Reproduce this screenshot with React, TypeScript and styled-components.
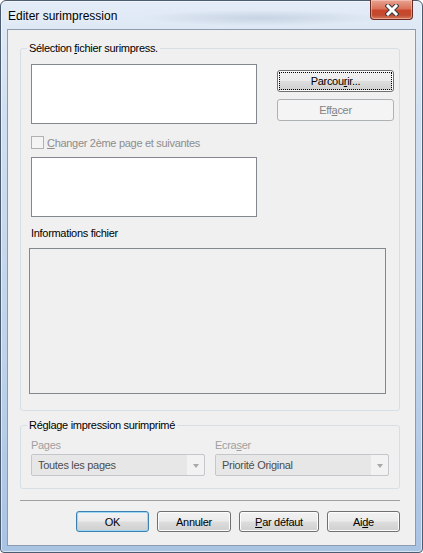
import React from 'react';
import styled, { createGlobalStyle } from 'styled-components';

const GlobalStyle = createGlobalStyle`
    html, body {
        margin: 0;
        padding: 0;
        background: #ffffff;
    }
    body {
        font-family: "Liberation Sans", Arial, sans-serif;
    }
`

const Window = styled.div`
    box-sizing: border-box;
    width: 423px;
    height: 553px;
    display: flex;
    flex-direction: column;
    padding: 0 6px 6px 6px;
    border: 1px solid #4b5b70;
    border-radius: 6px 6px 4px 4px;
    background: linear-gradient(180deg, #e3ecf7 0%, #d0def0 22%, #bed2ea 65%, #a9c3e3 100%);
    box-shadow: inset 0 0 0 1px rgba(255, 255, 255, 0.55);
`
const TitleBar = styled.div`
    height: 28px;
    display: flex;
    justify-content: space-between;
    align-items: flex-start;
    background: radial-gradient(ellipse 120px 8px at 62% 60%, rgba(110, 130, 155, 0.22), transparent);
`
const Title = styled.span`
    margin: 8px 0 0 1px;
    font-size: 12px;
    line-height: 15px;
    color: #000;
    text-shadow: 0 0 6px rgba(255, 255, 255, 0.9);
`
const CloseButton = styled.div`
    box-sizing: border-box;
    width: 43px;
    height: 20px;
    margin: -1px 3px 0 0;
    display: flex;
    align-items: center;
    justify-content: center;
    border: 1px solid #6a2c22;
    border-top: none;
    border-radius: 0 0 4px 4px;
    background: linear-gradient(180deg, #e8a493 0%, #d9735b 45%, #c8462a 55%, #c14b30 80%, #d77b5f 100%);
    box-shadow: inset 0 0 0 1px rgba(255, 220, 210, 0.45);
`
const Client = styled.div`
    flex: 1;
    display: flex;
    flex-direction: column;
    padding: 18px 15px 0 12px;
    border: 1px solid #8c9bae;
    background: #f0f0f0;
    font-size: 11px;
    letter-spacing: -0.3px;
    color: #000;
`
const Group = styled.div<{ $top: number; $bottom: number }>`
    display: flex;
    flex-direction: column;
    margin-top: ${p => p.$top}px;
    padding: 0 0 ${p => p.$bottom}px 10px;
    border: 1px solid #d5dfe5;
    border-radius: 3px;
`
const Legend = styled.div`
    align-self: flex-start;
    margin: -7px 0 0 -4px;
    padding: 0 2px;
    line-height: 13px;
    background: #f0f0f0;
`
const TopRow = styled.div`
    display: flex;
    align-items: flex-start;
    margin-top: 9px;
`
const TextBox = styled.div<{ $top?: number }>`
    box-sizing: border-box;
    width: 226px;
    height: 60px;
    margin-top: ${p => p.$top ?? 0}px;
    border: 1px solid #828790;
    background: #ffffff;
`
const ButtonColumn = styled.div`
    display: flex;
    flex-direction: column;
    gap: 7px;
    margin-left: 20px;
    padding-top: 6px;
`
const Button = styled.button<{ $w: number; $h?: number; $default?: boolean; $focus?: boolean }>`
    position: relative;
    box-sizing: border-box;
    width: ${p => p.$w}px;
    height: ${p => p.$h ?? 21}px;
    padding: 0;
    border: 1px solid ${p => (p.$default ? '#3c7fb1' : '#707070')};
    border-radius: 3px;
    background: linear-gradient(180deg, #f2f2f2 0%, #ebebeb 48%, #dddddd 52%, #cfcfcf 100%);
    box-shadow: inset 0 0 0 1px ${p => (p.$default ? '#9ad8f6' : '#fcfcfc')};
    font-family: "Liberation Sans", Arial, sans-serif;
    font-size: 11px;
    letter-spacing: -0.3px;
    color: #000;
    &::after {
        content: '';
        display: ${p => (p.$focus ? 'block' : 'none')};
        position: absolute;
        inset: 1px;
        border: 1px dotted #000;
    }
    &:disabled {
        border-color: #adb2b5;
        background: #f4f4f4;
        box-shadow: none;
        color: #838383;
    }
`
const CheckRow = styled.div`
    display: flex;
    align-items: center;
    gap: 3px;
    height: 13px;
    margin-top: 12px;
    color: #8d8d8d;
`
const CheckBox = styled.div`
    box-sizing: border-box;
    width: 13px;
    height: 13px;
    border: 1px solid #b1b1b1;
    background: #f4f4f4;
`
const FieldLabel = styled.div<{ $top: number; $muted?: boolean }>`
    margin-top: ${p => p.$top}px;
    line-height: 13px;
    color: ${p => (p.$muted ? '#a0a0a0' : '#000')};
`
const InfoBox = styled.div`
    box-sizing: border-box;
    width: 357px;
    height: 146px;
    margin: 8px 0 0 -2px;
    border: 1px solid #828790;
    background: #f0f0f0;
`
const ComboRow = styled.div`
    display: flex;
    gap: 10px;
    margin-top: 7px;
`
const ComboField = styled.div`
    display: flex;
    flex-direction: column;
    width: 174px;
`
const Combo = styled.div`
    box-sizing: border-box;
    display: flex;
    height: 22px;
    margin-top: 2px;
    border: 1px solid #c3c6cb;
    border-radius: 2px;
    background: #f2f2f2;
`
const ComboText = styled.div`
    flex: 1;
    padding-left: 6px;
    line-height: 20px;
    background: #e7e7e7;
    color: #4d4d4d;
`
const ComboArrow = styled.div`
    width: 17px;
    display: flex;
    align-items: center;
    justify-content: center;
    &::before {
        content: '';
        margin-top: 2px;
        border-left: 3.5px solid transparent;
        border-right: 3.5px solid transparent;
        border-top: 4px solid #a8a8a8;
    }
`
const Separator = styled.div`
    height: 1px;
    margin-top: 11px;
    background: #a0a0a0;
`
const ButtonRow = styled.div`
    display: flex;
    justify-content: flex-end;
    gap: 8px;
    margin-top: 10px;
`

const CloseIcon = () => (
    <svg width="14" height="12" viewBox="0 0 14 12">
        <path d="M3 2 L11 10 M11 2 L3 10" stroke="#3a3a3a" strokeWidth="5" strokeLinecap="square" />
        <path d="M3 2 L11 10 M11 2 L3 10" stroke="#ffffff" strokeWidth="3" strokeLinecap="square" />
    </svg>
);

const App: React.FC = () => {
    return (
        <>
            <GlobalStyle />
            <Window>
                <TitleBar>
                    <Title>Editer surimpression</Title>
                    <CloseButton>
                        <CloseIcon />
                    </CloseButton>
                </TitleBar>
                <Client>
                    <Group $top={0} $bottom={16}>
                        <Legend>Sélection <u>f</u>ichier surimpress.</Legend>
                        <TopRow>
                            <TextBox />
                            <ButtonColumn>
                                <Button $w={117} $h={22} $focus>Parcou<u>r</u>ir...</Button>
                                <Button $w={117} $h={22} disabled>Eff<u>a</u>cer</Button>
                            </ButtonColumn>
                        </TopRow>
                        <CheckRow>
                            <CheckBox />
                            <span><u>C</u>hanger 2ème page et suivantes</span>
                        </CheckRow>
                        <TextBox $top={8} />
                        <FieldLabel $top={10}>Informations fichier</FieldLabel>
                        <InfoBox />
                    </Group>
                    <Group $top={14} $bottom={12}>
                        <Legend>Réglage impression surimprimé</Legend>
                        <ComboRow>
                            <ComboField>
                                <FieldLabel $top={0} $muted>Pages</FieldLabel>
                                <Combo>
                                    <ComboText>Toutes les pages</ComboText>
                                    <ComboArrow />
                                </Combo>
                            </ComboField>
                            <ComboField>
                                <FieldLabel $top={0} $muted>Ecra<u>s</u>er</FieldLabel>
                                <Combo>
                                    <ComboText>Priorité Original</ComboText>
                                    <ComboArrow />
                                </Combo>
                            </ComboField>
                        </ComboRow>
                    </Group>
                    <Separator />
                    <ButtonRow>
                        <Button $w={73} $default>OK</Button>
                        <Button $w={74}>Annuler</Button>
                        <Button $w={80}><u>P</u>ar défaut</Button>
                        <Button $w={73}>Ai<u>d</u>e</Button>
                    </ButtonRow>
                </Client>
            </Window>
        </>
    );
}

export default App;
